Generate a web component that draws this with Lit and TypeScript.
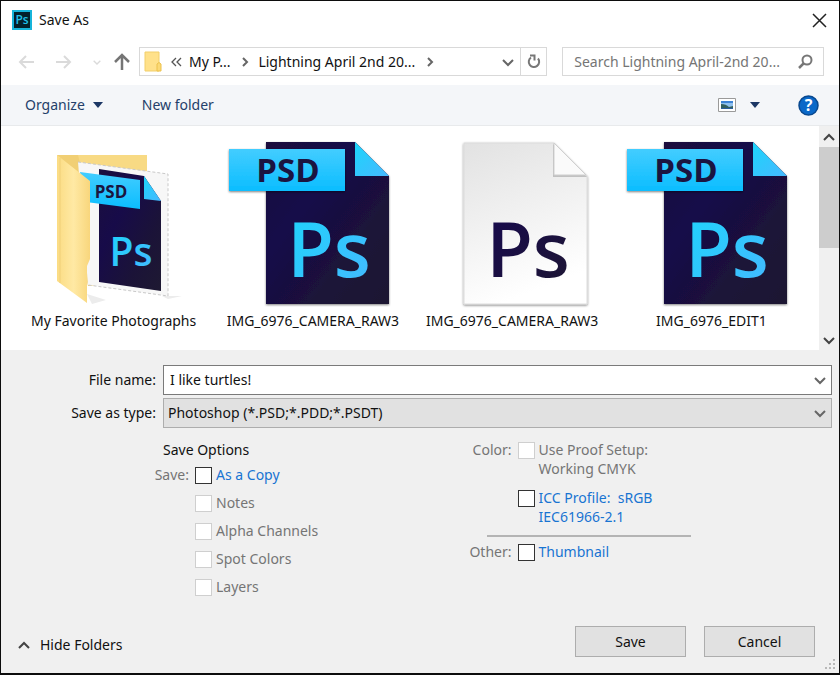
import { LitElement, html, svg, css } from "lit";
import { customElement, property } from "lit/decorators.js";

type Kind = "folder" | "psd" | "blank";

const chevron = (dir: "up" | "down" | "right", cls = "") => {
  const d = { up: "M1 9 6 4 11 9", down: "M1 4 6 9 11 4", right: "M4 2 8 6 4 10" }[dir];
  return html`<svg class="chev ${cls}" viewBox="0 0 12 12" aria-hidden="true"><path d=${d}></path></svg>`;
};

@customElement("file-art")
class FileArt extends LitElement {
  @property() kind: Kind = "psd";

  static styles = css`
    :host { display: block; }
    svg { display: block; width: 172px; height: 174px; }
    .ps { font-family: "Open Sans", "Noto Sans", sans-serif; font-weight: 600; font-size: 76px; }
    .psd { font-family: "Open Sans", "Noto Sans", sans-serif; font-weight: 700; font-size: 33px; }
    .ps.small { font-size: 39px; }
    .psd.small { font-size: 17px; }
  `;

  private defs() {
    return svg`<defs>
      <linearGradient id="dark" x1="0" y1="0" x2="1" y2="1">
        <stop offset="0" stop-color="#1b0f3d"></stop><stop offset=".35" stop-color="#170b49"></stop>
        <stop offset=".7" stop-color="#1b1338"></stop><stop offset="1" stop-color="#1e1932"></stop>
      </linearGradient>
      <linearGradient id="banner" x1="0" y1="0" x2="0" y2="1">
        <stop offset="0" stop-color="#43cdff"></stop><stop offset="1" stop-color="#0bbdff"></stop>
      </linearGradient>
      <linearGradient id="cyan" x1="0" y1="0" x2="1" y2="1">
        <stop offset="0" stop-color="#1cd5fb"></stop><stop offset="1" stop-color="#46b8ff"></stop>
      </linearGradient>
      <linearGradient id="ink" x1="0" y1="0" x2="1" y2="1">
        <stop offset="0" stop-color="#16084f"></stop><stop offset="1" stop-color="#1e1733"></stop>
      </linearGradient>
      <linearGradient id="paper" x1="0" y1="0" x2=".3" y2="1">
        <stop offset="0" stop-color="#e2e2e2"></stop><stop offset="1" stop-color="#ffffff"></stop>
      </linearGradient>
      <linearGradient id="flap" x1="0" y1="0" x2="1" y2="0">
        <stop offset="0" stop-color="#fbdc83"></stop><stop offset=".5" stop-color="#ffe9a4"></stop>
        <stop offset="1" stop-color="#f8d67c"></stop>
      </linearGradient>
      <filter id="shade" x="-10%" y="-10%" width="120%" height="130%">
        <feDropShadow dx="0" dy="1" stdDeviation="1" flood-color="#000" flood-opacity=".5"></feDropShadow>
      </filter>
    </defs>`;
  }

  private psd() {
    return svg`
      <path d="M39 6H128L162 40V168H39Z" fill="url(#dark)" filter="url(#shade)"></path>
      <path d="M128 6 162 40H128Z" fill="url(#cyan)"></path>
      <path d="M2 13H118V55H2Z" fill="url(#banner)" filter="url(#shade)"></path>
      <text class="psd" x="61" y="46" text-anchor="middle" fill="#1b1440">PSD</text>
      <text class="ps" x="102" y="141" text-anchor="middle" fill="url(#cyan)">Ps</text>`;
  }

  private blank() {
    return svg`
      <path d="M38 7H128L161 40V168H38Z" fill="url(#paper)" stroke="#dcdcdc" filter="url(#shade)"></path>
      <path d="M127 8V41H161Z" fill="#8a8a8a" opacity=".45"></path>
      <path d="M128 7V39H160Z" fill="#fafafa" stroke="#cfcfcf"></path>
      <text class="ps" x="102" y="141" text-anchor="middle" fill="url(#ink)">Ps</text>`;
  }

  private folder() {
    return svg`
      <path d="M59 158 78 164 64 168Z M134 160 154 160 140 163Z" fill="#ececec"></path>
      <path d="M29 19H119V150H60Z" fill="#f1cf74"></path>
      <path d="M50 19H119V60H60Z" fill="#f8da84"></path>
      <path d="M50 26 140 38V160L60 149Z" fill="#f7f7f7"></path>
      <path d="M50 26 140 38V160L60 149" fill="none" stroke="#c9c9c9" stroke-dasharray="3 2"></path>
      <path d="M71 33 116 40 133 65V155L71 146Z" fill="url(#dark)"></path>
      <path d="M116 40 133 65 116 63Z" fill="url(#cyan)"></path>
      <path d="M52 36 112 44V73L58 66Z" fill="url(#banner)"></path>
      <text class="psd small" x="83" y="62" text-anchor="middle" fill="#1b1440">PSD</text>
      <text class="ps small" x="103" y="130" text-anchor="middle" fill="url(#cyan)">Ps</text>
      <path d="M29 19 62 45V123L59 130V167L29 145Z" fill="url(#flap)"></path>
      <path d="M32 22V147" stroke="#f0cf78" fill="none"></path>`;
  }

  render() {
    const art = this.kind === "folder" ? this.folder() : this.kind === "blank" ? this.blank() : this.psd();
    return html`<svg viewBox="0 0 172 174" aria-hidden="true">${this.defs()}${art}</svg>`;
  }
}

@customElement("app-root")
class AppRoot extends LitElement {
  private files: { kind: Kind; name: string }[] = [
    { kind: "folder", name: "My Favorite Photographs" },
    { kind: "psd", name: "IMG_6976_CAMERA_RAW3" },
    { kind: "blank", name: "IMG_6976_CAMERA_RAW3" },
    { kind: "psd", name: "IMG_6976_EDIT1" },
  ];

  static styles = css`
    :host {
      display: block;
      font: 14px/20px "Noto Sans", "Open Sans", sans-serif;
      color: #111;
    }
    * { box-sizing: border-box; }
    button, input, select { font: inherit; color: inherit; margin: 0; padding: 0; border: 0; background: none; border-radius: 0; }
    button { display: flex; align-items: center; justify-content: center; white-space: nowrap; }
    svg { display: block; flex: none; }
    .dialog {
      display: flex; flex-direction: column; min-height: 100vh;
      border: 1px solid #0c0c0c; border-bottom-width: 2px; background: #f0f0f0;
    }
    .chev { width: 12px; height: 12px; fill: none; stroke: #666; stroke-width: 2; }
    .faint { stroke: #d4d4d4; width: 8px; height: 8px; }
    .dark { stroke: #444; stroke-width: 2; }

    .title { display: flex; align-items: center; gap: 7px; height: 38px; padding: 0 12px 0 11px; background: #fff; }
    .title h1 { flex: 1; margin: 0; font-size: 14px; font-weight: 400; }
    .applogo { font: 600 12px "Open Sans", sans-serif; }

    .nav { display: flex; align-items: center; padding: 8px 15px 9px 16px; background: #fff; }
    .arrows { display: flex; align-items: center; gap: 20px; margin-right: 8px; }
    .arrows svg { fill: none; stroke: #dadada; stroke-width: 2; }
    .arrows .up { stroke: #757575; stroke-width: 2; margin-left: -8px; }
    .address, .search { display: flex; align-items: center; height: 29px; border: 1px solid #d9d9d9; }
    .address { flex: 401 1 0; padding-left: 4px; }
    .spread { margin-left: auto; padding: 0 6px; }
    .reload { width: 26px; align-self: stretch; border-left: 1px solid #d9d9d9; }
    .back { margin: 0 6px 0 8px; }
    .thin { margin: 0 7px 0 9px; }
    .search { flex: 238 1 0; margin-left: 15px; padding: 0 10px 0 11px; }
    .search input { flex: 1; min-width: 0; outline: 0; color: #6d6d6d; text-overflow: ellipsis; }
    .search input::placeholder { color: #757575; opacity: 1; }

    .tools {
      display: flex; align-items: center; height: 41px; padding: 0 20px 0 24px;
      background: #f4f6f9; border-bottom: 1px solid #e8eaec; color: #24406a;
    }
    .tools .menu { gap: 8px; margin-right: 39px; }
    .tools .view { margin-left: auto; gap: 14px; margin-right: 38px; }

    .files { display: flex; background: #fff; height: 224px; }
    .grid { flex: 1; display: grid; grid-template-columns: repeat(4, 1fr); list-style: none; margin: 0; padding: 10px 8px 0 13px; }
    .grid li { display: flex; flex-direction: column; align-items: center; gap: 1px; white-space: nowrap; }
    .scroll { display: flex; flex-direction: column; width: 20px; background: #f0f0f0; }
    .scroll button { width: 20px; height: 21px; }
    .thumb { height: 101px; background: #cdcdcd; }
    .scroll .end { margin-top: auto; }

    .form { display: grid; grid-template-columns: 155px 1fr; gap: 3px 7px; padding: 15px 7px 0 0; align-items: center; }
    .form > label { text-align: right; white-space: nowrap; }
    .field { display: grid; grid-template-columns: 1fr 22px; align-items: center; height: 30px; border: 1px solid #7a7a7a; background: #fff; }
    .field input { grid-area: 1 / 1; padding-left: 6px; min-width: 0; outline: 0; }
    .field button, .field .over { grid-area: 1 / 2; justify-self: center; }
    .field.type { background: #e1e1e1; border-color: #adadad; }
    .field select { grid-area: 1 / 1 / 2 / 3; height: 28px; padding-left: 4px; appearance: none; outline: 0; }
    .over { pointer-events: none; }

    .options { display: grid; grid-template-columns: 54% 1fr; padding-top: 12px; color: #757575; }
    .col { display: grid; gap: 9px 6px; align-content: start; }
    .left { grid-template-columns: 188px 1fr; }
    .right { grid-template-columns: 58px 1fr; row-gap: 8px; }
    .right .check:first-of-type { padding-bottom: 2px; }
    .cap { text-align: right; line-height: 19px; }
    .heading { grid-column: 1 / 3; padding-left: 162px; margin: 0 0 -4px; font-size: 14px; font-weight: 400; color: #111; }
    .check { grid-column: 2; display: flex; gap: 4px; justify-self: start; line-height: 19px; }
    .check.on { color: #1874d2; }
    .check input { appearance: none; width: 17px; height: 17px; margin-top: 2px; flex: none; background: #fff; border: 1px solid #cfcfcf; }
    .check.on input { border-color: #333; }
    .check span { white-space: pre; }
    .rule { grid-column: 1 / 3; width: 204px; margin: 1px 0 -3px 33px; border: 0; border-top: 2px solid #b4b4b4; }

    .foot { display: flex; align-items: center; margin-top: auto; padding: 0 24px 16px 17px; gap: 18px; }
    .hide { gap: 10px; margin-right: auto; padding-top: 6px; }
    .push { width: 111px; height: 31px; background: #e1e1e1; border: 1px solid #adadad; }
    .corner { position: relative; }
    .grip { position: absolute; right: 3px; bottom: 3px; fill: #b8b8b8; }
  `;

  private check(text: string, on = false) {
    return html`<label class="check ${on ? "on" : ""}"><input type="checkbox" ?disabled=${!on}><span>${text}</span></label>`;
  }

  render() {
    return html`
      <main class="dialog">
        <header class="title">
          <svg width="20" height="20" viewBox="0 0 20 20" aria-hidden="true">
            <path d="M1 1H19V19H1Z" fill="#03202b" stroke="#16b4da" stroke-width="2"></path>
            <text class="applogo" x="10" y="14" text-anchor="middle" fill="#1fc0ea">Ps</text>
          </svg>
          <h1>Save As</h1>
          <button aria-label="Close">
            <svg width="15" height="15" viewBox="0 0 15 15" fill="none" stroke="#222" stroke-width="1.5"><path d="M1 1 14 14M14 1 1 14"></path></svg>
          </button>
        </header>

        <nav class="nav">
          <div class="arrows">
            <button aria-label="Back"><svg width="18" height="16" viewBox="0 0 18 16"><path d="M17 8H3M9 2 3 8 9 14"></path></svg></button>
            <button aria-label="Forward"><svg width="18" height="16" viewBox="0 0 18 16"><path d="M1 8H15M9 2 15 8 9 14"></path></svg></button>
            <button aria-label="Recent locations">${chevron("down", "faint")}</button>
            <button aria-label="Up"><svg class="up" width="18" height="18" viewBox="0 0 18 18"><path d="M9 17V3M2 9 9 2 16 9" stroke-width="2.500"></path></svg></button>
          </div>
          <div class="address">
            <svg width="19" height="21" viewBox="0 0 19 21"><path d="M1 1H15V20H1Z" fill="#ffe18a" stroke="#f2cf6a"></path><path d="M13 20V13Q15 10 17 13V20Z" fill="#fbd976" stroke="#ecc14d"></path></svg>
            <svg class="back" width="12" height="10" viewBox="0 0 12 10" fill="none" stroke="#555" stroke-width="1.3"><path d="M5 1 1 5 5 9M10 1 6 5 10 9"></path></svg>
            <button>My P...</button>
            ${chevron("right", "thin")}
            <button>Lightning April 2nd 20...</button>
            ${chevron("right", "thin")}
            <button class="spread" aria-label="Previous locations">${chevron("down")}</button>
            <button class="reload" aria-label="Refresh">
              <svg width="14" height="15" viewBox="0 0 14 15" fill="none" stroke="#777" stroke-width="2"><path d="M11 4.500A5.200 5.200 0 1 1 4 3.500"></path><path d="M3 1.500H7.500V6.500"></path></svg>
            </button>
          </div>
          <div class="search">
            <input type="text" aria-label="Search" placeholder="Search Lightning April-2nd 20...">
            <svg width="15" height="15" viewBox="0 0 15 15" fill="none" stroke="#777"><circle cx="9" cy="6" r="4.500" stroke-width="2"></circle><path d="M6 9 1 14" stroke-width="2.500"></path></svg>
          </div>
        </nav>

        <div class="tools">
          <button class="menu">Organize <svg width="10" height="6" viewBox="0 0 10 6" fill="#1c3765"><path d="M0 0H10L5 6Z"></path></svg></button>
          <button>New folder</button>
          <button class="view" aria-label="Change your view">
            <svg width="18" height="14" viewBox="0 0 18 14"><path d="M.5.5H17.500V13.500H.5Z" fill="#fff" stroke="#9a9a9a"></path><path d="M3 3H15V11H3Z" fill="#8fc0ee"></path><path d="M3 3H15V5H3Z" fill="#3d83d6"></path><path d="M3 6Q8 6 11 9L15 8V11H3Z" fill="#33605f"></path><path d="M3 10H15V11H3Z" fill="#2c5ea0"></path></svg>
            <svg width="10" height="6" viewBox="0 0 10 6" fill="#1c3765"><path d="M0 0H10L5 6Z"></path></svg>
          </button>
          <button aria-label="Help">
            <svg width="21" height="21" viewBox="0 0 21 21"><circle cx="10.500" cy="10.500" r="9.500" fill="#0a68c8" stroke="#08488f" stroke-width="1.500"></circle><text x="10.500" y="16" text-anchor="middle" font-size="16" font-weight="700" fill="#fff">?</text></svg>
          </button>
        </div>

        <section class="files">
          <ul class="grid">
            ${this.files.map((f) => html`<li><file-art .kind=${f.kind}></file-art><span>${f.name}</span></li>`)}
          </ul>
          <div class="scroll">
            <button aria-label="Scroll up">${chevron("up", "dark")}</button>
            <div class="thumb"></div>
            <button class="end" aria-label="Scroll down">${chevron("down", "dark")}</button>
          </div>
        </section>

        <section class="form">
          <label for="name">File name:</label>
          <div class="field">
            <input id="name" type="text" value="I like turtles!">
            <button aria-label="Recent names">${chevron("down")}</button>
          </div>
          <label for="type">Save as type:</label>
          <div class="field type">
            <select id="type"><option>Photoshop (*.PSD;*.PDD;*.PSDT)</option></select>
            <span class="over">${chevron("down")}</span>
          </div>
        </section>

        <section class="options">
          <div class="col left">
            <h2 class="heading">Save Options</h2>
            <span class="cap">Save:</span>
            ${this.check("As a Copy", true)}
            ${["Notes", "Alpha Channels", "Spot Colors", "Layers"].map((t) => this.check(t))}
          </div>
          <div class="col right">
            <span class="cap">Color:</span>
            ${this.check("Use Proof Setup:\nWorking CMYK")}
            ${this.check("ICC Profile:  sRGB\nIEC61966-2.1", true)}
            <hr class="rule">
            <span class="cap">Other:</span>
            ${this.check("Thumbnail", true)}
          </div>
        </section>

        <footer class="foot">
          <button class="hide">${chevron("up", "dark")}Hide Folders</button>
          <button class="push">Save</button>
          <button class="push">Cancel</button>
        </footer>
        <div class="corner">
          <svg class="grip" width="11" height="11" viewBox="0 0 11 11"><path d="M8 0h2v2H8zM4 4h2v2H4zM8 4h2v2H8zM0 8h2v2H0zM4 8h2v2H4zM8 8h2v2H8z"></path></svg>
        </div>
      </main>
    `;
  }
}
